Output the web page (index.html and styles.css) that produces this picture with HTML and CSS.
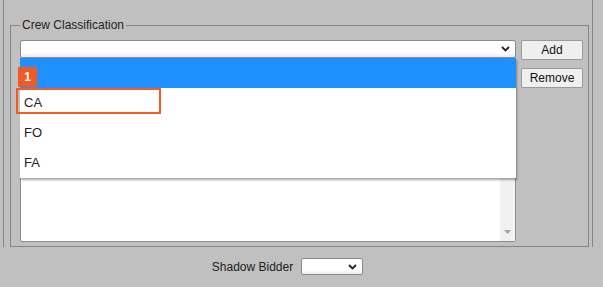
FILE: index.html
```html
<!DOCTYPE html>
<html lang="en">
<head>
    <meta charset="UTF-8">
    <title>Crew Classification</title>
    <link rel="stylesheet" href="styles.css">
</head>
<body>
    <div class="screen">
        <div class="panel">
            <div class="rail-left"></div>

            <fieldset class="crew-box">
                <legend>Crew Classification</legend>
                <div class="crew-grid">
                    <div class="crew-main">
                        <div class="select wide">
                            <span class="select-value"></span>
                            <svg class="chevron" width="9" height="6" viewBox="0 0 9 6"><path d="M1 1 L4.5 4.5 L8 1" fill="none" stroke="#222" stroke-width="1.8"/></svg>
                        </div>
                        <div class="listbox">
                            <div class="scrollbar">
                                <svg class="scroll-arrow" width="7" height="4" viewBox="0 0 7 4"><path d="M0 0 H7 L3.5 4 Z" fill="#a3a3a3"/></svg>
                            </div>
                        </div>
                    </div>
                    <div class="crew-actions">
                        <button class="btn">Add</button>
                        <button class="btn">Remove</button>
                    </div>
                </div>

                <!-- open dropdown of the select above -->
                <ul class="dropdown">
                    <li class="option selected"></li>
                    <li class="option">CA</li>
                    <li class="option">FO</li>
                    <li class="option">FA</li>
                </ul>
                <div class="highlight"></div>
                <div class="badge">1</div>
            </fieldset>

            <div class="rail-right"></div>
        </div>

        <div class="shadow-row">
            <label>Shadow Bidder</label>
            <div class="select small">
                <span class="select-value"></span>
                <svg class="chevron" width="9" height="6" viewBox="0 0 9 6"><path d="M1 1 L4.5 4.5 L8 1" fill="none" stroke="#222" stroke-width="1.8"/></svg>
            </div>
        </div>
    </div>
</body>
</html>
```

FILE: styles.css
```css
body {
    margin: 0;
    font-family: 'Liberation Sans', Arial, sans-serif;
    font-size: 12px;
    color: #222;
    background-color: #c0c0c0;
}

.screen {
    width: 603px;
    height: 287px;
    overflow: hidden;
}

.panel {
    display: flex;
    height: 247px;
}

.rail-left {
    width: 3px;
    border-right: 1px solid #858585;
    flex: none;
}

.rail-right {
    width: 0;
    margin-left: 3px;
    border-left: 1px solid #858585;
    flex: none;
}

.crew-box {
    position: relative;
    box-sizing: border-box;
    width: 579px;
    height: 229px;
    margin: 18px 0 0 6px;
    padding: 8px 0 0 9px;
    border: 1px solid #858585;
    flex: none;
}

.crew-box legend {
    padding: 0 2px;
    line-height: 14px;
    color: #222;
}

.crew-grid {
    display: flex;
    gap: 5px;
}

.crew-main {
    display: flex;
    flex-direction: column;
    gap: 5px;
    width: 496px;
}

.select {
    position: relative;
    box-sizing: border-box;
    background: linear-gradient(#fff 70%, #ececec);
    border: 1px solid #8a8a8a;
    border-radius: 2px;
}

.select.wide {
    height: 18px;
}

.select.small {
    width: 62px;
    height: 17px;
}

.chevron {
    position: absolute;
    right: 5px;
    top: 5px;
}

.listbox {
    position: relative;
    box-sizing: border-box;
    height: 179px;
    background-color: white;
    border: 1px solid #8c8c8c;
    border-radius: 2px;
}

.scrollbar {
    position: absolute;
    top: 0;
    right: 0;
    bottom: 0;
    width: 15px;
    background-color: #f1f1f1;
}

.scroll-arrow {
    position: absolute;
    left: 4px;
    bottom: 7px;
}

.crew-actions {
    display: flex;
    flex-direction: column;
    gap: 8px;
    width: 62px;
}

.btn {
    box-sizing: border-box;
    height: 20px;
    padding: 0;
    font-family: inherit;
    font-size: 12px;
    color: #111;
    background-color: #efefef;
    border: 1px solid #9a9a9a;
    border-radius: 2px;
}

.dropdown {
    position: absolute;
    left: 9px;
    top: 26px;
    width: 496px;
    margin: 0;
    padding: 0;
    list-style: none;
    background-color: white;
    box-shadow: 1px 2px 2px rgba(0, 0, 0, 0.35);
    font-size: 13px;
    color: #222;
}

.option {
    height: 30px;
    line-height: 30px;
    padding-left: 4px;
}

.option.selected {
    background-color: #1e90ff;
}

.highlight {
    position: absolute;
    left: 5px;
    top: 56px;
    width: 141px;
    height: 22px;
    border: 2px solid #f05a24;
}

.badge {
    position: absolute;
    left: 7px;
    top: 35px;
    width: 19px;
    height: 20px;
    line-height: 20px;
    text-align: center;
    background-color: #f05a24;
    color: white;
    font-weight: bold;
    font-size: 12px;
}

.shadow-row {
    display: flex;
    align-items: center;
    justify-content: center;
    gap: 8px;
    padding: 11px 28px 0 0;
}

.shadow-row label {
    color: #222;
}
```
